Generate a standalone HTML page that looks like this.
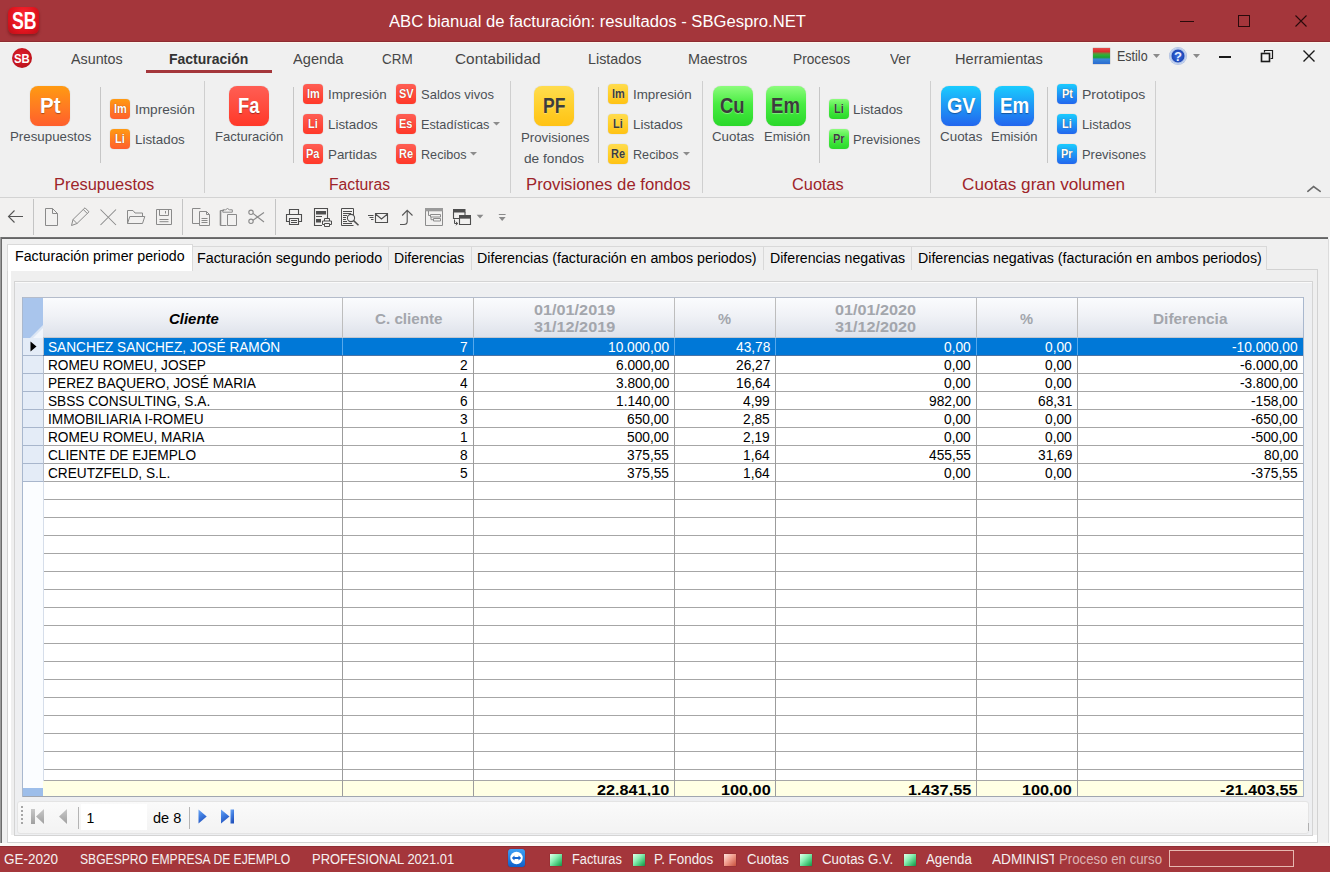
<!DOCTYPE html><html><head><meta charset="utf-8"><style>
html,body{margin:0;padding:0;}
body{width:1330px;height:872px;overflow:hidden;position:relative;background:#F0F0F0;font-family:"Liberation Sans",sans-serif;}
div{position:absolute;box-sizing:border-box;}
.t{white-space:pre;transform-origin:0 0;}
svg{position:absolute;overflow:visible;}
</style></head><body>
<div style="left:0px;top:0px;width:1330px;height:41px;background:#A4363B"></div>
<div style="left:7.5px;top:7px;width:31px;height:27px;background:radial-gradient(ellipse at 50% 35%,#FF2A35 0%,#E0141E 60%,#B80F18 100%);border-radius:6px;box-shadow:0 2px 3px rgba(90,0,0,0.45)"></div>
<div class="t" style="left:11.50px;top:8.68px;font-size:23px;line-height:25.695px;font-weight:bold;font-style:normal;color:#FFFFFF;transform:scaleX(0.7668);">SB</div>
<div class="t" style="left:388.60px;top:13.02px;font-size:16px;line-height:17.875px;font-weight:normal;font-style:normal;color:#FFFFFF;transform:scaleX(1.0394);">ABC bianual de facturación: resultados - SBGespro.NET</div>
<div style="left:1180px;top:21px;width:14px;height:1px;background:#2A0A0B"></div>
<div style="left:1238px;top:15px;width:12px;height:12px;border:1px solid #2A0A0B"></div>
<svg style="left:1295px;top:15px" width="12" height="12"><path d="M0.5 0.5L11.5 11.5M11.5 0.5L0.5 11.5" stroke="#2A0A0B" stroke-width="1.1"/></svg>
<div style="left:0px;top:42px;width:1330px;height:38px;background:#F0F0F0"></div>
<div style="left:0px;top:41px;width:1330px;height:1px;background:#8E2C32"></div>
<div style="left:0px;top:42px;width:1330px;height:1px;background:#FCF7EE"></div>
<div style="left:12px;top:48px;width:20px;height:20px;border-radius:50%;background:radial-gradient(circle at 45% 40%,#E2202B 0%,#C0141D 65%,#9A0E15 100%)"></div>
<div class="t" style="left:14.30px;top:51.73px;font-size:13px;line-height:14.523px;font-weight:bold;font-style:normal;color:#FFFFFF;transform:scaleX(0.8753);">SB</div>
<div class="t" style="left:71.30px;top:51.42px;font-size:15px;line-height:16.758px;font-weight:normal;font-style:normal;color:#474747;transform:scaleX(0.9539);">Asuntos</div>
<div class="t" style="left:292.60px;top:51.42px;font-size:15px;line-height:16.758px;font-weight:normal;font-style:normal;color:#474747;transform:scaleX(0.9749);">Agenda</div>
<div class="t" style="left:382.20px;top:51.42px;font-size:15px;line-height:16.758px;font-weight:normal;font-style:normal;color:#474747;transform:scaleX(0.8960);">CRM</div>
<div class="t" style="left:455.30px;top:51.42px;font-size:15px;line-height:16.758px;font-weight:normal;font-style:normal;color:#474747;transform:scaleX(1.0252);">Contabilidad</div>
<div class="t" style="left:588.20px;top:51.42px;font-size:15px;line-height:16.758px;font-weight:normal;font-style:normal;color:#474747;transform:scaleX(0.9543);">Listados</div>
<div class="t" style="left:687.50px;top:51.42px;font-size:15px;line-height:16.758px;font-weight:normal;font-style:normal;color:#474747;transform:scaleX(0.9611);">Maestros</div>
<div class="t" style="left:792.80px;top:51.42px;font-size:15px;line-height:16.758px;font-weight:normal;font-style:normal;color:#474747;transform:scaleX(0.9129);">Procesos</div>
<div class="t" style="left:889.60px;top:51.42px;font-size:15px;line-height:16.758px;font-weight:normal;font-style:normal;color:#474747;transform:scaleX(0.9067);">Ver</div>
<div class="t" style="left:954.60px;top:51.42px;font-size:15px;line-height:16.758px;font-weight:normal;font-style:normal;color:#474747;transform:scaleX(0.9750);">Herramientas</div>
<div class="t" style="left:168.70px;top:51.42px;font-size:15px;line-height:16.758px;font-weight:bold;font-style:normal;color:#333333;transform:scaleX(0.9329);">Facturación</div>
<div style="left:146px;top:70px;width:126px;height:3px;background:#A4363B"></div>
<div style="left:1093px;top:48px;width:17px;height:16px;background:linear-gradient(#E84A4A 0%,#D83030 22%,#6A8A3A 34%,#28B438 44%,#20A030 58%,#3A88D8 70%,#2A6AD0 100%);box-shadow:0 0 1px rgba(0,0,0,0.5)"></div>
<div class="t" style="left:1116.70px;top:48.83px;font-size:14px;line-height:15.641px;font-weight:normal;font-style:normal;color:#444444;transform:scaleX(0.8934);">Estilo</div>
<svg style="left:1153px;top:54px" width="8" height="5"><path d="M0 0H7L3.5 4Z" fill="#8A8A8A"/></svg>
<div style="left:1169px;top:47px;width:18px;height:18px;border-radius:50%;background:radial-gradient(circle 9px at 50% 50%,#3A6EE0 0px,#1E48B8 6px,#A8BCE6 6.8px,#C8D6F0 8px,#A0B2D8 9px)"></div>
<div class="t" style="left:1174.20px;top:50.23px;font-size:13px;line-height:14.523px;font-weight:bold;font-style:normal;color:#E8F0FF;transform:scaleX(1.0063);">?</div>
<svg style="left:1193px;top:54px" width="8" height="5"><path d="M0 0H7L3.5 4Z" fill="#8A8A8A"/></svg>
<div style="left:1219px;top:56px;width:12px;height:2px;background:#1A1A1A"></div>
<svg style="left:1261px;top:50px" width="12" height="12"><path d="M3.5 2.5V0.5H11.5V8.5H9.5" fill="none" stroke="#1A1A1A" stroke-width="1.2"/><rect x="0.5" y="3.5" width="8" height="8" fill="none" stroke="#1A1A1A" stroke-width="1.6"/></svg>
<svg style="left:1303px;top:50px" width="12" height="12"><path d="M0.5 0.5L11.5 11.5M11.5 0.5L0.5 11.5" stroke="#1A1A1A" stroke-width="1.4"/></svg>
<div style="left:0px;top:80px;width:1330px;height:117px;background:#F0F0F0"></div>
<div style="left:0px;top:197px;width:1330px;height:1px;background:#D3D3D3"></div>
<div style="left:0px;top:198px;width:1330px;height:39px;background:#F2F1F0"></div>
<div style="left:30px;top:86px;width:40px;height:40px;background:linear-gradient(#FF9A12,#FF7A22 55%,#FF5E2C);border-radius:8px;box-shadow:0 0 1px rgba(0,0,0,0.25)"></div>
<div class="t" style="left:40.30px;top:93.78px;font-size:22px;line-height:24.578px;font-weight:bold;font-style:normal;color:#FFFFFF;transform:scaleX(0.9318);text-shadow:0 1px 1px rgba(0,0,0,0.35);">Pt</div>
<div class="t" style="left:9.50px;top:129.28px;font-size:13.5px;line-height:15.082px;font-weight:normal;font-style:normal;color:#4C5056;transform:scaleX(0.9849);">Presupuestos</div>
<div style="left:100px;top:87px;width:1px;height:76px;background:#C6C6C6"></div>
<div style="left:110px;top:99px;width:20px;height:20px;background:linear-gradient(#FF9A12,#FF7A22 55%,#FF5E2C);border-radius:4px;box-shadow:0 0 1px rgba(0,0,0,0.3)"></div>
<div class="t" style="left:113.58px;top:103.18px;font-size:12.5px;line-height:13.965px;font-weight:bold;font-style:normal;color:#FFFFFF;transform:scaleX(0.8800);text-shadow:0 0 1px rgba(90,20,0,0.7);">Im</div>
<div class="t" style="left:134.50px;top:102.28px;font-size:13.5px;line-height:15.082px;font-weight:normal;font-style:normal;color:#4C5056;transform:scaleX(1.0076);">Impresión</div>
<div style="left:110px;top:129px;width:20px;height:20px;background:linear-gradient(#FF9A12,#FF7A22 55%,#FF5E2C);border-radius:4px;box-shadow:0 0 1px rgba(0,0,0,0.3)"></div>
<div class="t" style="left:115.12px;top:133.18px;font-size:12.5px;line-height:13.965px;font-weight:bold;font-style:normal;color:#FFFFFF;transform:scaleX(0.8800);text-shadow:0 0 1px rgba(90,20,0,0.7);">Li</div>
<div class="t" style="left:134.50px;top:132.28px;font-size:13.5px;line-height:15.082px;font-weight:normal;font-style:normal;color:#4C5056;transform:scaleX(0.9900);">Listados</div>
<div class="t" style="left:53.70px;top:175.52px;font-size:16px;line-height:17.875px;font-weight:normal;font-style:normal;color:#9E242A;transform:scaleX(1.0250);">Presupuestos</div>
<div style="left:204px;top:81px;width:1px;height:112px;background:#CFCFCF"></div>
<div style="left:229px;top:86px;width:40px;height:40px;background:linear-gradient(#FF5E54,#FF4A3C 55%,#FF3828);border-radius:8px;box-shadow:0 0 1px rgba(0,0,0,0.25)"></div>
<div class="t" style="left:238.30px;top:93.78px;font-size:22px;line-height:24.578px;font-weight:bold;font-style:normal;color:#FFFFFF;transform:scaleX(0.8317);text-shadow:0 1px 1px rgba(0,0,0,0.35);">Fa</div>
<div class="t" style="left:214.80px;top:129.28px;font-size:13.5px;line-height:15.082px;font-weight:normal;font-style:normal;color:#4C5056;transform:scaleX(0.9667);">Facturación</div>
<div style="left:293px;top:87px;width:1px;height:76px;background:#C6C6C6"></div>
<div style="left:303px;top:84px;width:20px;height:20px;background:linear-gradient(#FF5E54,#FF4A3C 55%,#FF3828);border-radius:4px;box-shadow:0 0 1px rgba(0,0,0,0.3)"></div>
<div class="t" style="left:306.58px;top:88.18px;font-size:12.5px;line-height:13.965px;font-weight:bold;font-style:normal;color:#FFFFFF;transform:scaleX(0.8800);text-shadow:0 0 1px rgba(90,20,0,0.7);">Im</div>
<div class="t" style="left:327.80px;top:87.28px;font-size:13.5px;line-height:15.082px;font-weight:normal;font-style:normal;color:#4C5056;transform:scaleX(0.9900);">Impresión</div>
<div style="left:303px;top:114px;width:20px;height:20px;background:linear-gradient(#FF5E54,#FF4A3C 55%,#FF3828);border-radius:4px;box-shadow:0 0 1px rgba(0,0,0,0.3)"></div>
<div class="t" style="left:308.12px;top:118.18px;font-size:12.5px;line-height:13.965px;font-weight:bold;font-style:normal;color:#FFFFFF;transform:scaleX(0.8800);text-shadow:0 0 1px rgba(90,20,0,0.7);">Li</div>
<div class="t" style="left:327.80px;top:117.28px;font-size:13.5px;line-height:15.082px;font-weight:normal;font-style:normal;color:#4C5056;transform:scaleX(0.9900);">Listados</div>
<div style="left:303px;top:144px;width:20px;height:20px;background:linear-gradient(#FF5E54,#FF4A3C 55%,#FF3828);border-radius:4px;box-shadow:0 0 1px rgba(0,0,0,0.3)"></div>
<div class="t" style="left:306.22px;top:148.18px;font-size:12.5px;line-height:13.965px;font-weight:bold;font-style:normal;color:#FFFFFF;transform:scaleX(0.8800);text-shadow:0 0 1px rgba(90,20,0,0.7);">Pa</div>
<div class="t" style="left:327.80px;top:147.28px;font-size:13.5px;line-height:15.082px;font-weight:normal;font-style:normal;color:#4C5056;transform:scaleX(0.9900);">Partidas</div>
<div style="left:396px;top:84px;width:20px;height:20px;background:linear-gradient(#FF5E54,#FF4A3C 55%,#FF3828);border-radius:4px;box-shadow:0 0 1px rgba(0,0,0,0.3)"></div>
<div class="t" style="left:398.65px;top:88.18px;font-size:12.5px;line-height:13.965px;font-weight:bold;font-style:normal;color:#FFFFFF;transform:scaleX(0.8800);text-shadow:0 0 1px rgba(90,20,0,0.7);">SV</div>
<div class="t" style="left:420.60px;top:87.28px;font-size:13.5px;line-height:15.082px;font-weight:normal;font-style:normal;color:#4C5056;transform:scaleX(0.9630);">Saldos vivos</div>
<div style="left:396px;top:114px;width:20px;height:20px;background:linear-gradient(#FF5E54,#FF4A3C 55%,#FF3828);border-radius:4px;box-shadow:0 0 1px rgba(0,0,0,0.3)"></div>
<div class="t" style="left:399.27px;top:118.18px;font-size:12.5px;line-height:13.965px;font-weight:bold;font-style:normal;color:#FFFFFF;transform:scaleX(0.8800);text-shadow:0 0 1px rgba(90,20,0,0.7);">Es</div>
<div class="t" style="left:420.60px;top:117.28px;font-size:13.5px;line-height:15.082px;font-weight:normal;font-style:normal;color:#4C5056;transform:scaleX(0.9400);">Estadísticas</div>
<div style="left:396px;top:144px;width:20px;height:20px;background:linear-gradient(#FF5E54,#FF4A3C 55%,#FF3828);border-radius:4px;box-shadow:0 0 1px rgba(0,0,0,0.3)"></div>
<div class="t" style="left:398.96px;top:148.18px;font-size:12.5px;line-height:13.965px;font-weight:bold;font-style:normal;color:#FFFFFF;transform:scaleX(0.8800);text-shadow:0 0 1px rgba(90,20,0,0.7);">Re</div>
<div class="t" style="left:420.60px;top:147.28px;font-size:13.5px;line-height:15.082px;font-weight:normal;font-style:normal;color:#4C5056;transform:scaleX(0.9350);">Recibos</div>
<svg style="left:493px;top:122px" width="7" height="4"><path d="M0 0H7L3.5 3.5Z" fill="#8C8C8C"/></svg>
<svg style="left:470px;top:152px" width="7" height="4"><path d="M0 0H7L3.5 3.5Z" fill="#8C8C8C"/></svg>
<div class="t" style="left:328.50px;top:175.52px;font-size:16px;line-height:17.875px;font-weight:normal;font-style:normal;color:#9E242A;transform:scaleX(0.9815);">Facturas</div>
<div style="left:510px;top:81px;width:1px;height:112px;background:#CFCFCF"></div>
<div style="left:534px;top:86px;width:40px;height:40px;background:linear-gradient(#FFDC4E,#FFCF2A 55%,#FFC214);border-radius:8px;box-shadow:0 0 1px rgba(0,0,0,0.25)"></div>
<div class="t" style="left:543.00px;top:93.78px;font-size:22px;line-height:24.578px;font-weight:bold;font-style:normal;color:#3C3C3C;transform:scaleX(0.7936);text-shadow:0 1px 1px rgba(255,255,255,0.35);">PF</div>
<div class="t" style="left:520.50px;top:129.78px;font-size:13.5px;line-height:15.082px;font-weight:normal;font-style:normal;color:#4C5056;transform:scaleX(0.9814);">Provisiones</div>
<div class="t" style="left:524.30px;top:150.78px;font-size:13.5px;line-height:15.082px;font-weight:normal;font-style:normal;color:#4C5056;transform:scaleX(1.0135);">de fondos</div>
<div style="left:598px;top:87px;width:1px;height:76px;background:#C6C6C6"></div>
<div style="left:608px;top:84px;width:20px;height:20px;background:linear-gradient(#FFDC4E,#FFCF2A 55%,#FFC214);border-radius:4px;box-shadow:0 0 1px rgba(0,0,0,0.3)"></div>
<div class="t" style="left:611.58px;top:88.18px;font-size:12.5px;line-height:13.965px;font-weight:bold;font-style:normal;color:#3C3C3C;transform:scaleX(0.8800);text-shadow:0 0 1px rgba(255,255,255,0.6);">Im</div>
<div class="t" style="left:632.60px;top:87.28px;font-size:13.5px;line-height:15.082px;font-weight:normal;font-style:normal;color:#4C5056;transform:scaleX(0.9900);">Impresión</div>
<div style="left:608px;top:114px;width:20px;height:20px;background:linear-gradient(#FFDC4E,#FFCF2A 55%,#FFC214);border-radius:4px;box-shadow:0 0 1px rgba(0,0,0,0.3)"></div>
<div class="t" style="left:613.12px;top:118.18px;font-size:12.5px;line-height:13.965px;font-weight:bold;font-style:normal;color:#3C3C3C;transform:scaleX(0.8800);text-shadow:0 0 1px rgba(255,255,255,0.6);">Li</div>
<div class="t" style="left:632.60px;top:117.28px;font-size:13.5px;line-height:15.082px;font-weight:normal;font-style:normal;color:#4C5056;transform:scaleX(0.9900);">Listados</div>
<div style="left:608px;top:144px;width:20px;height:20px;background:linear-gradient(#FFDC4E,#FFCF2A 55%,#FFC214);border-radius:4px;box-shadow:0 0 1px rgba(0,0,0,0.3)"></div>
<div class="t" style="left:610.96px;top:148.18px;font-size:12.5px;line-height:13.965px;font-weight:bold;font-style:normal;color:#3C3C3C;transform:scaleX(0.8800);text-shadow:0 0 1px rgba(255,255,255,0.6);">Re</div>
<div class="t" style="left:632.60px;top:147.28px;font-size:13.5px;line-height:15.082px;font-weight:normal;font-style:normal;color:#4C5056;transform:scaleX(0.9350);">Recibos</div>
<svg style="left:683px;top:152px" width="7" height="4"><path d="M0 0H7L3.5 3.5Z" fill="#8C8C8C"/></svg>
<div class="t" style="left:525.80px;top:175.52px;font-size:16px;line-height:17.875px;font-weight:normal;font-style:normal;color:#9E242A;transform:scaleX(1.0454);">Provisiones de fondos</div>
<div style="left:702px;top:81px;width:1px;height:112px;background:#CFCFCF"></div>
<div style="left:713px;top:86px;width:40px;height:40px;background:linear-gradient(#8CFC7C,#48EC42 45%,#2AD82A);border-radius:8px;box-shadow:0 0 1px rgba(0,0,0,0.25)"></div>
<div class="t" style="left:720.20px;top:93.78px;font-size:22px;line-height:24.578px;font-weight:bold;font-style:normal;color:#3C3C3C;transform:scaleX(0.8382);text-shadow:0 1px 1px rgba(255,255,255,0.35);">Cu</div>
<div style="left:766px;top:86px;width:40px;height:40px;background:linear-gradient(#8CFC7C,#48EC42 45%,#2AD82A);border-radius:8px;box-shadow:0 0 1px rgba(0,0,0,0.25)"></div>
<div class="t" style="left:771.30px;top:93.78px;font-size:22px;line-height:24.578px;font-weight:bold;font-style:normal;color:#3C3C3C;transform:scaleX(0.8438);text-shadow:0 1px 1px rgba(255,255,255,0.35);">Em</div>
<div class="t" style="left:712.30px;top:129.28px;font-size:13.5px;line-height:15.082px;font-weight:normal;font-style:normal;color:#4C5056;transform:scaleX(0.9871);">Cuotas</div>
<div class="t" style="left:763.50px;top:129.28px;font-size:13.5px;line-height:15.082px;font-weight:normal;font-style:normal;color:#4C5056;transform:scaleX(0.9604);">Emisión</div>
<div style="left:819px;top:87px;width:1px;height:76px;background:#C6C6C6"></div>
<div style="left:829px;top:99px;width:20px;height:20px;background:linear-gradient(#8CFC7C,#48EC42 45%,#2AD82A);border-radius:4px;box-shadow:0 0 1px rgba(0,0,0,0.3)"></div>
<div class="t" style="left:834.12px;top:103.18px;font-size:12.5px;line-height:13.965px;font-weight:bold;font-style:normal;color:#3C3C3C;transform:scaleX(0.8800);text-shadow:0 0 1px rgba(255,255,255,0.6);">Li</div>
<div class="t" style="left:853.40px;top:102.28px;font-size:13.5px;line-height:15.082px;font-weight:normal;font-style:normal;color:#4C5056;transform:scaleX(0.9900);">Listados</div>
<div style="left:829px;top:129px;width:20px;height:20px;background:linear-gradient(#8CFC7C,#48EC42 45%,#2AD82A);border-radius:4px;box-shadow:0 0 1px rgba(0,0,0,0.3)"></div>
<div class="t" style="left:833.19px;top:133.18px;font-size:12.5px;line-height:13.965px;font-weight:bold;font-style:normal;color:#3C3C3C;transform:scaleX(0.8800);text-shadow:0 0 1px rgba(255,255,255,0.6);">Pr</div>
<div class="t" style="left:853.40px;top:132.28px;font-size:13.5px;line-height:15.082px;font-weight:normal;font-style:normal;color:#4C5056;transform:scaleX(0.9628);">Previsiones</div>
<div class="t" style="left:791.70px;top:175.52px;font-size:16px;line-height:17.875px;font-weight:normal;font-style:normal;color:#9E242A;transform:scaleX(1.0217);">Cuotas</div>
<div style="left:930px;top:81px;width:1px;height:112px;background:#CFCFCF"></div>
<div style="left:941px;top:86px;width:40px;height:40px;background:linear-gradient(#1ACCFF,#1E9CF6 45%,#2266EE);border-radius:8px;box-shadow:0 0 1px rgba(0,0,0,0.25)"></div>
<div class="t" style="left:946.70px;top:93.78px;font-size:22px;line-height:24.578px;font-weight:bold;font-style:normal;color:#FFFFFF;transform:scaleX(0.8962);text-shadow:0 1px 1px rgba(0,0,0,0.35);">GV</div>
<div style="left:994px;top:86px;width:40px;height:40px;background:linear-gradient(#1ACCFF,#1E9CF6 45%,#2266EE);border-radius:8px;box-shadow:0 0 1px rgba(0,0,0,0.25)"></div>
<div class="t" style="left:999.50px;top:93.78px;font-size:22px;line-height:24.578px;font-weight:bold;font-style:normal;color:#FFFFFF;transform:scaleX(0.8555);text-shadow:0 1px 1px rgba(0,0,0,0.35);">Em</div>
<div class="t" style="left:940.30px;top:129.28px;font-size:13.5px;line-height:15.082px;font-weight:normal;font-style:normal;color:#4C5056;transform:scaleX(0.9942);">Cuotas</div>
<div class="t" style="left:991.40px;top:129.28px;font-size:13.5px;line-height:15.082px;font-weight:normal;font-style:normal;color:#4C5056;transform:scaleX(0.9667);">Emisión</div>
<div style="left:1047px;top:87px;width:1px;height:76px;background:#C6C6C6"></div>
<div style="left:1057px;top:84px;width:20px;height:20px;background:linear-gradient(#1ACCFF,#1E9CF6 45%,#2266EE);border-radius:4px;box-shadow:0 0 1px rgba(0,0,0,0.3)"></div>
<div class="t" style="left:1061.50px;top:88.18px;font-size:12.5px;line-height:13.965px;font-weight:bold;font-style:normal;color:#FFFFFF;transform:scaleX(0.8800);text-shadow:0 0 1px rgba(90,20,0,0.7);">Pt</div>
<div class="t" style="left:1081.70px;top:87.28px;font-size:13.5px;line-height:15.082px;font-weight:normal;font-style:normal;color:#4C5056;transform:scaleX(1.0411);">Prototipos</div>
<div style="left:1057px;top:114px;width:20px;height:20px;background:linear-gradient(#1ACCFF,#1E9CF6 45%,#2266EE);border-radius:4px;box-shadow:0 0 1px rgba(0,0,0,0.3)"></div>
<div class="t" style="left:1062.12px;top:118.18px;font-size:12.5px;line-height:13.965px;font-weight:bold;font-style:normal;color:#FFFFFF;transform:scaleX(0.8800);text-shadow:0 0 1px rgba(90,20,0,0.7);">Li</div>
<div class="t" style="left:1081.70px;top:117.28px;font-size:13.5px;line-height:15.082px;font-weight:normal;font-style:normal;color:#4C5056;transform:scaleX(0.9761);">Listados</div>
<div style="left:1057px;top:144px;width:20px;height:20px;background:linear-gradient(#1ACCFF,#1E9CF6 45%,#2266EE);border-radius:4px;box-shadow:0 0 1px rgba(0,0,0,0.3)"></div>
<div class="t" style="left:1061.19px;top:148.18px;font-size:12.5px;line-height:13.965px;font-weight:bold;font-style:normal;color:#FFFFFF;transform:scaleX(0.8800);text-shadow:0 0 1px rgba(90,20,0,0.7);">Pr</div>
<div class="t" style="left:1081.70px;top:147.28px;font-size:13.5px;line-height:15.082px;font-weight:normal;font-style:normal;color:#4C5056;transform:scaleX(0.9566);">Previsones</div>
<div class="t" style="left:962.40px;top:175.52px;font-size:16px;line-height:17.875px;font-weight:normal;font-style:normal;color:#9E242A;transform:scaleX(1.0717);">Cuotas gran volumen</div>
<div style="left:1155px;top:81px;width:1px;height:112px;background:#CFCFCF"></div>
<svg style="left:1307px;top:184px" width="14" height="9"><path d="M0.8 7.3L6.6 2.6L13.2 7.3" fill="none" stroke="#6A6A6A" stroke-width="1.6" stroke-linecap="round"/></svg>
<svg style="left:0;top:0" width="1330" height="872" viewBox="0 0 1330 872">
<g fill="none" stroke-linejoin="miter" stroke-linecap="butt">
<!-- back arrow -->
<path d="M8.5 216.5H23M14.5 210.5L8.5 216.5L14.5 222.5" stroke="#555" stroke-width="1.1"/>
<rect x="33" y="199" width="1" height="36" fill="#C4C4C4" stroke="none"/>
<!-- new doc -->
<path d="M45.5 208.5H52.5L57.5 213.5V225.5H45.5Z M52.5 208.5V213.5H57.5" stroke="#8A8A8A" stroke-width="1"/>
<!-- pencil -->
<path d="M71.5 225.5L73 219.5L85 207.8L89 211.8L77 223.5Z M73 219.5L77 223.5 M83.3 209.5L87.3 213.5" stroke="#8A8A8A" stroke-width="1"/>
<!-- X -->
<path d="M100.5 209.5L116 225M116 209.5L100.5 225" stroke="#8A8A8A" stroke-width="1.05"/>
<!-- folder -->
<path d="M127.5 223.5V210.5H133L135 213H142.5V216.5 M127.5 223.5L129.8 216.5H144.8L142.5 223.5Z" stroke="#8A8A8A" stroke-width="1"/>
<!-- floppy -->
<path d="M156.5 209.5H171.5V224.5H156.5Z M159.5 209.5V215.5H168.5V209.5 M165.5 211V213.5 M159.5 219.5H168.5 M159.5 221.7H168.5" stroke="#8A8A8A" stroke-width="1"/>
<rect x="182" y="199" width="1" height="36" fill="#C4C4C4" stroke="none"/>
<!-- copy -->
<path d="M200.5 208.5H192.5V223.5H199 M199.5 211.5H206.5L209.5 214.5V225.5H199.5Z M206.5 211.5V214.5H209.5 M201.5 218.5H207.5M201.5 220.5H207.5M201.5 222.5H207.5" stroke="#8A8A8A" stroke-width="1"/>
<!-- paste -->
<path d="M224 210.5H220.5V225.5H226.5 M222.8 212.2V209.8H225.5L227.5 208.5L229.5 209.8H232.3V212.2Z M227.5 214.5H236.5V225.5H227.5Z" stroke="#8A8A8A" stroke-width="1"/>
<path d="M220.5 210.5V225.5" stroke="#8A8A8A" stroke-width="1.6"/>
<!-- scissors -->
<circle cx="251" cy="212.3" r="2.2" stroke="#8A8A8A" stroke-width="1.1"/>
<circle cx="251" cy="221.3" r="2.2" stroke="#8A8A8A" stroke-width="1.1"/>
<path d="M253 220.2L264 212.5 M253 213.4L264 222" stroke="#8A8A8A" stroke-width="1.1"/>
<rect x="275" y="199" width="1" height="36" fill="#C4C4C4" stroke="none"/>
<!-- printer -->
<path d="M289.5 214.5V209.5H298.5V214.5 M289.5 221.5H286.5V214.5H301.5V221.5H298.5 M289.5 218.5H298.5V224.5H289.5Z M291 220.5H297M291 222.5H297" stroke="#4E4E4E" stroke-width="1.1"/>
<!-- report print -->
<path d="M322 225.5H314.5V208.5H327.5V218" stroke="#4E4E4E" stroke-width="1.1"/>
<rect x="316" y="211" width="10" height="3.5" fill="#4E4E4E" stroke="none"/>
<rect x="316" y="216" width="6" height="1" fill="#4E4E4E" stroke="none"/>
<rect x="316" y="219" width="5" height="3.5" fill="#4E4E4E" stroke="none"/>
<path d="M324.5 221V218.5H329.5V221 M324.5 224.5H322.5V221H331.5V224.5H329.5 M324.5 223.5H329.5V226.5H324.5Z" stroke="#4E4E4E" stroke-width="1"/>
<!-- preview -->
<path d="M353.5 215V208.5H341.5V225.5H353.5 M343 211.5H352M343 213.5H351M343 215.5H347M343 217.5H346M343 219.5H346M343 221.5H347M343 223.5H352" stroke="#4E4E4E" stroke-width="1"/>
<circle cx="351" cy="218" r="3.6" stroke="#4E4E4E" stroke-width="1.1" fill="#F0F0F0"/>
<path d="M353.6 220.6L358.5 225.3" stroke="#4E4E4E" stroke-width="1.5"/>
<!-- email -->
<path d="M375.5 213.5H387.5V222.5H375.5Z M375.5 214L381.5 219L387.5 214" stroke="#4E4E4E" stroke-width="1.1"/>
<path d="M368 215.5H373.5M369.5 217.5H373.5M371 219.5H373.5" stroke="#4E4E4E" stroke-width="1"/>
<!-- arrow up -->
<path d="M407.2 210V221.5Q407.2 224.5 404 224.5H400 M402.2 215.5L407.2 210.3L412.5 215.5" stroke="#555" stroke-width="1.1"/>
<!-- tree window -->
<path d="M425.5 208.5H442.5V225.5H425.5Z" stroke="#8C8C8C" stroke-width="1"/>
<rect x="425" y="208" width="18" height="3.3" fill="#9A9A9A" stroke="none"/>
<path d="M428.5 211V215.5H430.5 M430.5 214.5H440.5V217H430.5Z M433.5 218.5H440.5V221H433.5Z M431 217V219.7H433.5" stroke="#8C8C8C" stroke-width="1"/>
<!-- windows -->
<path d="M453.5 212V218.5H459 M465 212V215" stroke="#4E4E4E" stroke-width="1.1"/>
<rect x="453" y="209" width="12.5" height="3.5" fill="#4E4E4E" stroke="none"/>
<path d="M459.5 218H470.5V224.5H459.5Z" stroke="#4E4E4E" stroke-width="1.1"/>
<rect x="459" y="215" width="12" height="3.3" fill="#4E4E4E" stroke="none"/>
<path d="M454.5 219.5V223.5H457.5M455.8 221.8L457.8 223.5L455.8 225.2" stroke="#4E4E4E" stroke-width="1"/>
<path d="M476.7 214.8H483.4L480.05 218.4Z" fill="#8A8A8A" stroke="none"/>
<rect x="498.8" y="214" width="6.8" height="1" fill="#8A8A8A" stroke="none"/>
<path d="M498.8 217H505.6L502.2 221Z" fill="#8A8A8A" stroke="none"/>
</g></svg>
<div style="left:0px;top:237px;width:1330px;height:608px;background:#F0F0F0"></div>
<div style="left:1px;top:237px;width:1327px;height:2px;background:linear-gradient(#787878,#5E5E5E)"></div>
<div style="left:1328px;top:239px;width:1px;height:604px;background:#DCDCDC"></div>
<div style="left:1329px;top:237px;width:1px;height:606px;background:#FAFAFA"></div>
<div style="left:0px;top:237px;width:2px;height:606px;background:#6B6B6B"></div>
<div style="left:0px;top:237px;width:1px;height:606px;background:#9A9A9A"></div>
<div style="left:7px;top:269px;width:1311px;height:574px;background:#FFFFFF;border:1px solid #D2D2D2"></div>
<div style="left:10.5px;top:270px;width:1306px;height:565px;background:#EFEFEF"></div>
<div style="left:192px;top:246px;width:196.5px;height:24px;background:#F0F0F0;border:1px solid #D9D9D9;border-bottom:none"></div>
<div class="t" style="left:196.80px;top:250.63px;font-size:14px;line-height:15.641px;font-weight:normal;font-style:normal;color:#000000;transform:scaleX(1.0212);">Facturación segundo periodo</div>
<div style="left:387.5px;top:246px;width:84.0px;height:24px;background:#F0F0F0;border:1px solid #D9D9D9;border-bottom:none"></div>
<div class="t" style="left:394.20px;top:250.63px;font-size:14px;line-height:15.641px;font-weight:normal;font-style:normal;color:#000000;transform:scaleX(1.0050);">Diferencias</div>
<div style="left:470.5px;top:246px;width:293.0px;height:24px;background:#F0F0F0;border:1px solid #D9D9D9;border-bottom:none"></div>
<div class="t" style="left:477.30px;top:250.63px;font-size:14px;line-height:15.641px;font-weight:normal;font-style:normal;color:#000000;transform:scaleX(1.0175);">Diferencias (facturación en ambos periodos)</div>
<div style="left:762.5px;top:246px;width:149.0px;height:24px;background:#F0F0F0;border:1px solid #D9D9D9;border-bottom:none"></div>
<div class="t" style="left:769.70px;top:250.63px;font-size:14px;line-height:15.641px;font-weight:normal;font-style:normal;color:#000000;transform:scaleX(1.0093);">Diferencias negativas</div>
<div style="left:910.5px;top:246px;width:356.0px;height:24px;background:#F0F0F0;border:1px solid #D9D9D9;border-bottom:none"></div>
<div class="t" style="left:917.80px;top:250.63px;font-size:14px;line-height:15.641px;font-weight:normal;font-style:normal;color:#000000;transform:scaleX(1.0154);">Diferencias negativas (facturación en ambos periodos)</div>
<div style="left:7px;top:244px;width:186px;height:27px;background:#FFFFFF;border:1px solid #DADADA;border-bottom:none"></div>
<div style="left:8px;top:268px;width:184px;height:2px;background:#FFFFFF"></div>
<div class="t" style="left:15.20px;top:248.63px;font-size:14px;line-height:15.641px;font-weight:normal;font-style:normal;color:#000000;transform:scaleX(1.0137);">Facturación primer periodo</div>
<div style="left:14px;top:281px;width:1299px;height:555px;background:#EEEFF1;border:1px solid #D4D4D4"></div>
<div style="left:15px;top:282px;width:1297px;height:1px;background:#FAFAFA"></div>
<div style="left:22px;top:297px;width:1282px;height:500px;background:#FFFFFF"></div>
<div style="left:43px;top:297px;width:1261px;height:41px;background:linear-gradient(#FBFCFE,#F0F2F6 45%,#DDE1EA)"></div>
<div style="left:22px;top:297px;width:21px;height:41px;background:#A9C5EC"></div>
<svg style="left:22px;top:297px" width="21" height="41"><path d="M21 28V41H8Z" fill="#DCE6F4"/><path d="M21 31V41H11Z" fill="#F2F6FC"/></svg>
<div style="left:22px;top:297px;width:1282px;height:1px;background:#B4BCCB"></div>
<div style="left:342px;top:298px;width:1px;height:40px;background:#BDBDBD"></div>
<div style="left:473px;top:298px;width:1px;height:40px;background:#BDBDBD"></div>
<div style="left:674px;top:298px;width:1px;height:40px;background:#BDBDBD"></div>
<div style="left:775px;top:298px;width:1px;height:40px;background:#BDBDBD"></div>
<div style="left:976px;top:298px;width:1px;height:40px;background:#BDBDBD"></div>
<div style="left:1077px;top:298px;width:1px;height:40px;background:#BDBDBD"></div>
<div style="left:43px;top:337px;width:1261px;height:1px;background:#C2C7D0"></div>
<div class="t" style="left:169.40px;top:311.83px;font-size:14px;line-height:15.641px;font-weight:bold;font-style:italic;color:#000000;transform:scaleX(1.0685);">Cliente</div>
<div class="t" style="left:374.80px;top:311.83px;font-size:14px;line-height:15.641px;font-weight:bold;font-style:normal;color:#A3A6AC;transform:scaleX(1.0843);">C. cliente</div>
<div class="t" style="left:533.60px;top:302.53px;font-size:14px;line-height:15.641px;font-weight:bold;font-style:normal;color:#A3A6AC;transform:scaleX(1.1592);">01/01/2019</div>
<div class="t" style="left:533.60px;top:320.03px;font-size:14px;line-height:15.641px;font-weight:bold;font-style:normal;color:#A3A6AC;transform:scaleX(1.1592);">31/12/2019</div>
<div class="t" style="left:717.96px;top:311.83px;font-size:14px;line-height:15.641px;font-weight:bold;font-style:normal;color:#A3A6AC;transform:scaleX(1.0500);">%</div>
<div class="t" style="left:835.44px;top:302.53px;font-size:14px;line-height:15.641px;font-weight:bold;font-style:normal;color:#A3A6AC;transform:scaleX(1.1580);">01/01/2020</div>
<div class="t" style="left:835.44px;top:320.03px;font-size:14px;line-height:15.641px;font-weight:bold;font-style:normal;color:#A3A6AC;transform:scaleX(1.1580);">31/12/2020</div>
<div class="t" style="left:1020.46px;top:311.83px;font-size:14px;line-height:15.641px;font-weight:bold;font-style:normal;color:#A3A6AC;transform:scaleX(1.0500);">%</div>
<div class="t" style="left:1153.21px;top:311.83px;font-size:14px;line-height:15.641px;font-weight:bold;font-style:normal;color:#A3A6AC;transform:scaleX(1.1000);">Diferencia</div>
<div style="left:22px;top:338px;width:21px;height:144px;background:#E4ECF7"></div>
<div style="left:22px;top:482px;width:21px;height:298px;background:#FBFDFF"></div>
<div style="left:43px;top:338px;width:1261px;height:18px;background:#0078D7"></div>
<div style="left:22px;top:355px;width:21px;height:1px;background:#A8B6CC"></div>
<div style="left:22px;top:373px;width:21px;height:1px;background:#A8B6CC"></div>
<div style="left:22px;top:391px;width:21px;height:1px;background:#A8B6CC"></div>
<div style="left:22px;top:409px;width:21px;height:1px;background:#A8B6CC"></div>
<div style="left:22px;top:427px;width:21px;height:1px;background:#A8B6CC"></div>
<div style="left:22px;top:445px;width:21px;height:1px;background:#A8B6CC"></div>
<div style="left:22px;top:463px;width:21px;height:1px;background:#A8B6CC"></div>
<div style="left:22px;top:481px;width:21px;height:1px;background:#A8B6CC"></div>
<div style="left:43px;top:355px;width:1261px;height:1px;background:#A6A6A6"></div>
<div style="left:43px;top:373px;width:1261px;height:1px;background:#A6A6A6"></div>
<div style="left:43px;top:391px;width:1261px;height:1px;background:#A6A6A6"></div>
<div style="left:43px;top:409px;width:1261px;height:1px;background:#A6A6A6"></div>
<div style="left:43px;top:427px;width:1261px;height:1px;background:#A6A6A6"></div>
<div style="left:43px;top:445px;width:1261px;height:1px;background:#A6A6A6"></div>
<div style="left:43px;top:463px;width:1261px;height:1px;background:#A6A6A6"></div>
<div style="left:43px;top:481px;width:1261px;height:1px;background:#A6A6A6"></div>
<div style="left:43px;top:499px;width:1261px;height:1px;background:#A6A6A6"></div>
<div style="left:43px;top:517px;width:1261px;height:1px;background:#A6A6A6"></div>
<div style="left:43px;top:535px;width:1261px;height:1px;background:#A6A6A6"></div>
<div style="left:43px;top:553px;width:1261px;height:1px;background:#A6A6A6"></div>
<div style="left:43px;top:571px;width:1261px;height:1px;background:#A6A6A6"></div>
<div style="left:43px;top:589px;width:1261px;height:1px;background:#A6A6A6"></div>
<div style="left:43px;top:607px;width:1261px;height:1px;background:#A6A6A6"></div>
<div style="left:43px;top:625px;width:1261px;height:1px;background:#A6A6A6"></div>
<div style="left:43px;top:643px;width:1261px;height:1px;background:#A6A6A6"></div>
<div style="left:43px;top:661px;width:1261px;height:1px;background:#A6A6A6"></div>
<div style="left:43px;top:679px;width:1261px;height:1px;background:#A6A6A6"></div>
<div style="left:43px;top:697px;width:1261px;height:1px;background:#A6A6A6"></div>
<div style="left:43px;top:715px;width:1261px;height:1px;background:#A6A6A6"></div>
<div style="left:43px;top:733px;width:1261px;height:1px;background:#A6A6A6"></div>
<div style="left:43px;top:751px;width:1261px;height:1px;background:#A6A6A6"></div>
<div style="left:43px;top:769px;width:1261px;height:1px;background:#A6A6A6"></div>
<div style="left:43px;top:780px;width:1261px;height:1px;background:#A6A6A6"></div>
<div style="left:342px;top:338px;width:1px;height:443px;background:#9C9C9C"></div>
<div style="left:473px;top:338px;width:1px;height:443px;background:#9C9C9C"></div>
<div style="left:674px;top:338px;width:1px;height:443px;background:#9C9C9C"></div>
<div style="left:775px;top:338px;width:1px;height:443px;background:#9C9C9C"></div>
<div style="left:976px;top:338px;width:1px;height:443px;background:#9C9C9C"></div>
<div style="left:1077px;top:338px;width:1px;height:443px;background:#9C9C9C"></div>
<div style="left:43px;top:338px;width:1px;height:144px;background:#B6BFCD"></div>
<div style="left:43px;top:482px;width:1px;height:299px;background:#D6DEEA"></div>
<div style="left:43px;top:355px;width:1261px;height:1px;background:#4A74A8"></div>
<div style="left:342px;top:338px;width:1px;height:17px;background:#56A8EC"></div>
<div style="left:473px;top:338px;width:1px;height:17px;background:#56A8EC"></div>
<div style="left:674px;top:338px;width:1px;height:17px;background:#56A8EC"></div>
<div style="left:775px;top:338px;width:1px;height:17px;background:#56A8EC"></div>
<div style="left:976px;top:338px;width:1px;height:17px;background:#56A8EC"></div>
<div style="left:1077px;top:338px;width:1px;height:17px;background:#56A8EC"></div>
<svg style="left:29.5px;top:341px" width="8" height="11"><path d="M0.5 0.5L6.5 5.5L0.5 10.5Z" fill="#000"/></svg>
<div class="t" style="left:48.30px;top:340.01px;font-size:13.8px;line-height:15.417px;font-weight:normal;font-style:normal;color:#FFFFFF;transform:scaleX(0.9900);">SANCHEZ SANCHEZ, JOSÉ RAMÓN</div>
<div class="t" style="left:460.34px;top:340.01px;font-size:13.8px;line-height:15.417px;font-weight:normal;font-style:normal;color:#FFFFFF;transform:scaleX(0.9950);">7</div>
<div class="t" style="left:607.91px;top:340.01px;font-size:13.8px;line-height:15.417px;font-weight:normal;font-style:normal;color:#FFFFFF;transform:scaleX(0.9950);">10.000,00</div>
<div class="t" style="left:735.62px;top:340.01px;font-size:13.8px;line-height:15.417px;font-weight:normal;font-style:normal;color:#FFFFFF;transform:scaleX(0.9950);">43,78</div>
<div class="t" style="left:944.28px;top:340.01px;font-size:13.8px;line-height:15.417px;font-weight:normal;font-style:normal;color:#FFFFFF;transform:scaleX(0.9950);">0,00</div>
<div class="t" style="left:1045.28px;top:340.01px;font-size:13.8px;line-height:15.417px;font-weight:normal;font-style:normal;color:#FFFFFF;transform:scaleX(0.9950);">0,00</div>
<div class="t" style="left:1232.33px;top:340.01px;font-size:13.8px;line-height:15.417px;font-weight:normal;font-style:normal;color:#FFFFFF;transform:scaleX(0.9950);">-10.000,00</div>
<div class="t" style="left:48.30px;top:358.01px;font-size:13.8px;line-height:15.417px;font-weight:normal;font-style:normal;color:#000000;transform:scaleX(0.9900);">ROMEU ROMEU, JOSEP</div>
<div class="t" style="left:460.34px;top:358.01px;font-size:13.8px;line-height:15.417px;font-weight:normal;font-style:normal;color:#000000;transform:scaleX(0.9950);">2</div>
<div class="t" style="left:615.57px;top:358.01px;font-size:13.8px;line-height:15.417px;font-weight:normal;font-style:normal;color:#000000;transform:scaleX(0.9950);">6.000,00</div>
<div class="t" style="left:735.62px;top:358.01px;font-size:13.8px;line-height:15.417px;font-weight:normal;font-style:normal;color:#000000;transform:scaleX(0.9950);">26,27</div>
<div class="t" style="left:944.28px;top:358.01px;font-size:13.8px;line-height:15.417px;font-weight:normal;font-style:normal;color:#000000;transform:scaleX(0.9950);">0,00</div>
<div class="t" style="left:1045.28px;top:358.01px;font-size:13.8px;line-height:15.417px;font-weight:normal;font-style:normal;color:#000000;transform:scaleX(0.9950);">0,00</div>
<div class="t" style="left:1239.99px;top:358.01px;font-size:13.8px;line-height:15.417px;font-weight:normal;font-style:normal;color:#000000;transform:scaleX(0.9950);">-6.000,00</div>
<div class="t" style="left:48.30px;top:376.01px;font-size:13.8px;line-height:15.417px;font-weight:normal;font-style:normal;color:#000000;transform:scaleX(0.9900);">PEREZ BAQUERO, JOSÉ MARIA</div>
<div class="t" style="left:460.34px;top:376.01px;font-size:13.8px;line-height:15.417px;font-weight:normal;font-style:normal;color:#000000;transform:scaleX(0.9950);">4</div>
<div class="t" style="left:615.57px;top:376.01px;font-size:13.8px;line-height:15.417px;font-weight:normal;font-style:normal;color:#000000;transform:scaleX(0.9950);">3.800,00</div>
<div class="t" style="left:735.62px;top:376.01px;font-size:13.8px;line-height:15.417px;font-weight:normal;font-style:normal;color:#000000;transform:scaleX(0.9950);">16,64</div>
<div class="t" style="left:944.28px;top:376.01px;font-size:13.8px;line-height:15.417px;font-weight:normal;font-style:normal;color:#000000;transform:scaleX(0.9950);">0,00</div>
<div class="t" style="left:1045.28px;top:376.01px;font-size:13.8px;line-height:15.417px;font-weight:normal;font-style:normal;color:#000000;transform:scaleX(0.9950);">0,00</div>
<div class="t" style="left:1239.99px;top:376.01px;font-size:13.8px;line-height:15.417px;font-weight:normal;font-style:normal;color:#000000;transform:scaleX(0.9950);">-3.800,00</div>
<div class="t" style="left:48.30px;top:394.01px;font-size:13.8px;line-height:15.417px;font-weight:normal;font-style:normal;color:#000000;transform:scaleX(0.9900);">SBSS CONSULTING, S.A.</div>
<div class="t" style="left:460.34px;top:394.01px;font-size:13.8px;line-height:15.417px;font-weight:normal;font-style:normal;color:#000000;transform:scaleX(0.9950);">6</div>
<div class="t" style="left:615.57px;top:394.01px;font-size:13.8px;line-height:15.417px;font-weight:normal;font-style:normal;color:#000000;transform:scaleX(0.9950);">1.140,00</div>
<div class="t" style="left:743.28px;top:394.01px;font-size:13.8px;line-height:15.417px;font-weight:normal;font-style:normal;color:#000000;transform:scaleX(0.9950);">4,99</div>
<div class="t" style="left:929.01px;top:394.01px;font-size:13.8px;line-height:15.417px;font-weight:normal;font-style:normal;color:#000000;transform:scaleX(0.9950);">982,00</div>
<div class="t" style="left:1037.62px;top:394.01px;font-size:13.8px;line-height:15.417px;font-weight:normal;font-style:normal;color:#000000;transform:scaleX(0.9950);">68,31</div>
<div class="t" style="left:1251.43px;top:394.01px;font-size:13.8px;line-height:15.417px;font-weight:normal;font-style:normal;color:#000000;transform:scaleX(0.9950);">-158,00</div>
<div class="t" style="left:48.30px;top:412.01px;font-size:13.8px;line-height:15.417px;font-weight:normal;font-style:normal;color:#000000;transform:scaleX(0.9900);">IMMOBILIARIA I-ROMEU</div>
<div class="t" style="left:460.34px;top:412.01px;font-size:13.8px;line-height:15.417px;font-weight:normal;font-style:normal;color:#000000;transform:scaleX(0.9950);">3</div>
<div class="t" style="left:627.01px;top:412.01px;font-size:13.8px;line-height:15.417px;font-weight:normal;font-style:normal;color:#000000;transform:scaleX(0.9950);">650,00</div>
<div class="t" style="left:743.28px;top:412.01px;font-size:13.8px;line-height:15.417px;font-weight:normal;font-style:normal;color:#000000;transform:scaleX(0.9950);">2,85</div>
<div class="t" style="left:944.28px;top:412.01px;font-size:13.8px;line-height:15.417px;font-weight:normal;font-style:normal;color:#000000;transform:scaleX(0.9950);">0,00</div>
<div class="t" style="left:1045.28px;top:412.01px;font-size:13.8px;line-height:15.417px;font-weight:normal;font-style:normal;color:#000000;transform:scaleX(0.9950);">0,00</div>
<div class="t" style="left:1251.43px;top:412.01px;font-size:13.8px;line-height:15.417px;font-weight:normal;font-style:normal;color:#000000;transform:scaleX(0.9950);">-650,00</div>
<div class="t" style="left:48.30px;top:430.01px;font-size:13.8px;line-height:15.417px;font-weight:normal;font-style:normal;color:#000000;transform:scaleX(0.9900);">ROMEU ROMEU, MARIA</div>
<div class="t" style="left:460.34px;top:430.01px;font-size:13.8px;line-height:15.417px;font-weight:normal;font-style:normal;color:#000000;transform:scaleX(0.9950);">1</div>
<div class="t" style="left:627.01px;top:430.01px;font-size:13.8px;line-height:15.417px;font-weight:normal;font-style:normal;color:#000000;transform:scaleX(0.9950);">500,00</div>
<div class="t" style="left:743.28px;top:430.01px;font-size:13.8px;line-height:15.417px;font-weight:normal;font-style:normal;color:#000000;transform:scaleX(0.9950);">2,19</div>
<div class="t" style="left:944.28px;top:430.01px;font-size:13.8px;line-height:15.417px;font-weight:normal;font-style:normal;color:#000000;transform:scaleX(0.9950);">0,00</div>
<div class="t" style="left:1045.28px;top:430.01px;font-size:13.8px;line-height:15.417px;font-weight:normal;font-style:normal;color:#000000;transform:scaleX(0.9950);">0,00</div>
<div class="t" style="left:1251.43px;top:430.01px;font-size:13.8px;line-height:15.417px;font-weight:normal;font-style:normal;color:#000000;transform:scaleX(0.9950);">-500,00</div>
<div class="t" style="left:48.30px;top:448.01px;font-size:13.8px;line-height:15.417px;font-weight:normal;font-style:normal;color:#000000;transform:scaleX(0.9900);">CLIENTE DE EJEMPLO</div>
<div class="t" style="left:460.34px;top:448.01px;font-size:13.8px;line-height:15.417px;font-weight:normal;font-style:normal;color:#000000;transform:scaleX(0.9950);">8</div>
<div class="t" style="left:627.01px;top:448.01px;font-size:13.8px;line-height:15.417px;font-weight:normal;font-style:normal;color:#000000;transform:scaleX(0.9950);">375,55</div>
<div class="t" style="left:743.28px;top:448.01px;font-size:13.8px;line-height:15.417px;font-weight:normal;font-style:normal;color:#000000;transform:scaleX(0.9950);">1,64</div>
<div class="t" style="left:929.01px;top:448.01px;font-size:13.8px;line-height:15.417px;font-weight:normal;font-style:normal;color:#000000;transform:scaleX(0.9950);">455,55</div>
<div class="t" style="left:1037.62px;top:448.01px;font-size:13.8px;line-height:15.417px;font-weight:normal;font-style:normal;color:#000000;transform:scaleX(0.9950);">31,69</div>
<div class="t" style="left:1263.62px;top:448.01px;font-size:13.8px;line-height:15.417px;font-weight:normal;font-style:normal;color:#000000;transform:scaleX(0.9950);">80,00</div>
<div class="t" style="left:48.30px;top:466.01px;font-size:13.8px;line-height:15.417px;font-weight:normal;font-style:normal;color:#000000;transform:scaleX(0.9900);">CREUTZFELD, S.L.</div>
<div class="t" style="left:460.34px;top:466.01px;font-size:13.8px;line-height:15.417px;font-weight:normal;font-style:normal;color:#000000;transform:scaleX(0.9950);">5</div>
<div class="t" style="left:627.01px;top:466.01px;font-size:13.8px;line-height:15.417px;font-weight:normal;font-style:normal;color:#000000;transform:scaleX(0.9950);">375,55</div>
<div class="t" style="left:743.28px;top:466.01px;font-size:13.8px;line-height:15.417px;font-weight:normal;font-style:normal;color:#000000;transform:scaleX(0.9950);">1,64</div>
<div class="t" style="left:944.28px;top:466.01px;font-size:13.8px;line-height:15.417px;font-weight:normal;font-style:normal;color:#000000;transform:scaleX(0.9950);">0,00</div>
<div class="t" style="left:1045.28px;top:466.01px;font-size:13.8px;line-height:15.417px;font-weight:normal;font-style:normal;color:#000000;transform:scaleX(0.9950);">0,00</div>
<div class="t" style="left:1251.43px;top:466.01px;font-size:13.8px;line-height:15.417px;font-weight:normal;font-style:normal;color:#000000;transform:scaleX(0.9950);">-375,55</div>
<div style="left:22px;top:780px;width:21px;height:17px;background:#FBFDFF"></div>
<div style="left:22px;top:788px;width:21px;height:9px;background:#9DBEEA"></div>
<div style="left:43px;top:781px;width:1261px;height:15px;background:#FFFFE4"></div>
<div style="left:43px;top:781px;width:1261px;height:15px;overflow:hidden">
<div class="t" style="left:554.03px;top:2.33px;font-size:14px;line-height:15.641px;font-weight:bold;font-style:normal;color:#000000;transform:scaleX(1.1600);">22.841,10</div>
<div class="t" style="left:677.55px;top:2.33px;font-size:14px;line-height:15.641px;font-weight:bold;font-style:normal;color:#000000;transform:scaleX(1.1600);">100,00</div>
<div class="t" style="left:864.78px;top:2.33px;font-size:14px;line-height:15.641px;font-weight:bold;font-style:normal;color:#000000;transform:scaleX(1.1600);">1.437,55</div>
<div class="t" style="left:979.35px;top:2.33px;font-size:14px;line-height:15.641px;font-weight:bold;font-style:normal;color:#000000;transform:scaleX(1.1600);">100,00</div>
<div class="t" style="left:1177.14px;top:2.33px;font-size:14px;line-height:15.641px;font-weight:bold;font-style:normal;color:#000000;transform:scaleX(1.1600);">-21.403,55</div>
</div>
<div style="left:342px;top:781px;width:1px;height:15px;background:#9C9C9C"></div>
<div style="left:473px;top:781px;width:1px;height:15px;background:#9C9C9C"></div>
<div style="left:674px;top:781px;width:1px;height:15px;background:#9C9C9C"></div>
<div style="left:775px;top:781px;width:1px;height:15px;background:#9C9C9C"></div>
<div style="left:976px;top:781px;width:1px;height:15px;background:#9C9C9C"></div>
<div style="left:1077px;top:781px;width:1px;height:15px;background:#9C9C9C"></div>
<div style="left:22px;top:796px;width:1282px;height:1px;background:#A0A6B0"></div>
<div style="left:22px;top:297px;width:1px;height:500px;background:#A9B8CE"></div>
<div style="left:1303px;top:297px;width:1px;height:500px;background:#A9B8CE"></div>
<div style="left:17px;top:801px;width:1292px;height:33px;background:linear-gradient(#FAFAFA,#F3F3F3);border:1px solid #E4E4E4;border-radius:3px"></div>
<div style="left:21px;top:806px;width:2px;height:2px;background:#A6A6A6"></div>
<div style="left:21px;top:810px;width:2px;height:2px;background:#A6A6A6"></div>
<div style="left:21px;top:814px;width:2px;height:2px;background:#A6A6A6"></div>
<div style="left:21px;top:818px;width:2px;height:2px;background:#A6A6A6"></div>
<div style="left:21px;top:822px;width:2px;height:2px;background:#A6A6A6"></div>
<svg style="left:0;top:0" width="1330" height="872"><defs><linearGradient id="nb" x1="0" y1="0" x2="0.4" y2="1"><stop offset="0" stop-color="#6FA8F5"/><stop offset="0.5" stop-color="#3F7CE0"/><stop offset="1" stop-color="#2454BE"/></linearGradient><linearGradient id="ng" x1="0" y1="0" x2="0" y2="1"><stop offset="0" stop-color="#C8C8C8"/><stop offset="1" stop-color="#A0A0A0"/></linearGradient></defs><g stroke="none"><rect x="31" y="809" width="4" height="15" fill="url(#ng)"/><path d="M44 809V824L36 816.5Z" fill="url(#ng)"/><path d="M67 809V824L59 816.5Z" fill="url(#ng)"/><rect x="78" y="807" width="1" height="22" fill="#B4B4B4"/><rect x="189" y="807" width="1" height="22" fill="#B4B4B4"/><path d="M198.5 809.5V823.5L206.7 816.5Z" fill="url(#nb)"/><path d="M221 809.5V823.5L229.5 816.5Z" fill="url(#nb)"/><rect x="230.5" y="809.5" width="3.5" height="14" fill="url(#nb)"/></g></svg>
<div style="left:81px;top:804px;width:66px;height:26px;background:#FFFFFF"></div>
<div class="t" style="left:86.50px;top:810.83px;font-size:14px;line-height:15.641px;font-weight:normal;font-style:normal;color:#000000;">1</div>
<div class="t" style="left:152.50px;top:810.83px;font-size:14px;line-height:15.641px;font-weight:normal;font-style:normal;color:#000000;transform:scaleX(1.0385);">de 8</div>
<div style="left:1308px;top:823px;width:1px;height:8px;background:#B0B0B0"></div>
<div style="left:0px;top:843px;width:1330px;height:3px;background:#FCFAF6"></div>
<div style="left:0px;top:846px;width:1330px;height:26px;background:#A4363B"></div>
<div style="left:0px;top:846px;width:1330px;height:1px;background:#8E2C34"></div>
<div class="t" style="left:4.30px;top:851.83px;font-size:14px;line-height:15.641px;font-weight:normal;font-style:normal;color:#F4F0F0;transform:scaleX(0.9634);">GE-2020</div>
<div class="t" style="left:79.80px;top:851.83px;font-size:14px;line-height:15.641px;font-weight:normal;font-style:normal;color:#F4F0F0;transform:scaleX(0.8659);">SBGESPRO EMPRESA DE EJEMPLO</div>
<div class="t" style="left:311.50px;top:851.83px;font-size:14px;line-height:15.641px;font-weight:normal;font-style:normal;color:#F4F0F0;transform:scaleX(0.9267);">PROFESIONAL 2021.01</div>
<div style="left:508px;top:849px;width:17px;height:18px;background:linear-gradient(#3DA0F5,#0E5FCB);border-radius:3px;box-shadow:0 0 1px rgba(0,0,40,0.6)"></div>
<svg style="left:508px;top:849px" width="17" height="18"><circle cx="8.5" cy="9" r="6.2" fill="#FFFFFF"/><path d="M3.8 9L6.5 6.6V8H10.5V6.6L13.2 9L10.5 11.4V10H6.5V11.4Z" fill="#1466D2"/></svg>
<div style="left:550.0px;top:853.5px;width:12px;height:12px;background:linear-gradient(135deg,#E4FFEA 0%,#8CF0B4 40%,#3CC070 75%,#1E8A48 100%);box-shadow:0 0 1px rgba(60,0,0,0.5)"></div>
<div class="t" style="left:571.60px;top:851.83px;font-size:14px;line-height:15.641px;font-weight:normal;font-style:normal;color:#F4F0F0;transform:scaleX(0.9146);">Facturas</div>
<div style="left:633.0px;top:853.5px;width:12px;height:12px;background:linear-gradient(135deg,#E4FFEA 0%,#8CF0B4 40%,#3CC070 75%,#1E8A48 100%);box-shadow:0 0 1px rgba(60,0,0,0.5)"></div>
<div class="t" style="left:654.30px;top:851.83px;font-size:14px;line-height:15.641px;font-weight:normal;font-style:normal;color:#F4F0F0;transform:scaleX(0.9548);">P. Fondos</div>
<div style="left:724.1px;top:853.5px;width:12px;height:12px;background:linear-gradient(135deg,#FFE6E0 0%,#F2A090 45%,#C8503C 100%);box-shadow:0 0 1px rgba(60,0,0,0.5)"></div>
<div class="t" style="left:746.70px;top:851.83px;font-size:14px;line-height:15.641px;font-weight:normal;font-style:normal;color:#F4F0F0;transform:scaleX(0.9425);">Cuotas</div>
<div style="left:799.8px;top:853.5px;width:12px;height:12px;background:linear-gradient(135deg,#E4FFEA 0%,#8CF0B4 40%,#3CC070 75%,#1E8A48 100%);box-shadow:0 0 1px rgba(60,0,0,0.5)"></div>
<div class="t" style="left:821.50px;top:851.83px;font-size:14px;line-height:15.641px;font-weight:normal;font-style:normal;color:#F4F0F0;transform:scaleX(0.9513);">Cuotas G.V.</div>
<div style="left:903.7px;top:853.5px;width:12px;height:12px;background:linear-gradient(135deg,#E4FFEA 0%,#8CF0B4 40%,#3CC070 75%,#1E8A48 100%);box-shadow:0 0 1px rgba(60,0,0,0.5)"></div>
<div class="t" style="left:925.60px;top:851.83px;font-size:14px;line-height:15.641px;font-weight:normal;font-style:normal;color:#F4F0F0;transform:scaleX(0.9503);">Agenda</div>
<div style="left:985px;top:846px;width:69px;height:26px;overflow:hidden">
<div class="t" style="left:6.80px;top:5.83px;font-size:14px;line-height:15.641px;font-weight:normal;font-style:normal;color:#F4F0F0;transform:scaleX(0.9730);">ADMINIST</div>
</div>
<div class="t" style="left:1059.00px;top:851.83px;font-size:14px;line-height:15.641px;font-weight:normal;font-style:normal;color:#DDB4B4;transform:scaleX(0.9454);">Proceso en curso</div>
<div style="left:1169px;top:850px;width:125px;height:17px;border:1px solid #E6B8B0"></div></body></html>
